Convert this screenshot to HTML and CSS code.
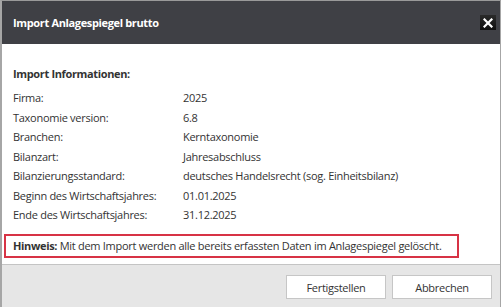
FILE: index.html
```html
<!DOCTYPE html>
<html lang="de">
<head>
<meta charset="utf-8">
<link rel="stylesheet" href="styles.css">
</head>
<body>
<div class="dialog">
  <div class="header">
    <span class="title">Import Anlagespiegel brutto</span>
    <button class="close" aria-label="Schließen">
      <svg width="10" height="10" viewBox="0 0 10 10"><path d="M1.5 1.5 L8.5 8.5 M8.5 1.5 L1.5 8.5" stroke="#fff" stroke-width="2.2" stroke-linecap="square"/></svg>
    </button>
  </div>
  <div class="content">
    <div class="section-title">Import Informationen:</div>
    <div class="info">
      <div class="label">Firma:</div><div class="value">2025</div>
      <div class="label">Taxonomie version:</div><div class="value">6.8</div>
      <div class="label">Branchen:</div><div class="value">Kerntaxonomie</div>
      <div class="label">Bilanzart:</div><div class="value">Jahresabschluss</div>
      <div class="label">Bilanzierungsstandard:</div><div class="value">deutsches Handelsrecht (sog. Einheitsbilanz)</div>
      <div class="label">Beginn des Wirtschaftsjahres:</div><div class="value">01.01.2025</div>
      <div class="label">Ende des Wirtschaftsjahres:</div><div class="value">31.12.2025</div>
    </div>
    <div class="notice"><strong>Hinweis:</strong> Mit dem Import werden alle bereits erfassten Daten im Anlagespiegel gelöscht.</div>
  </div>
  <div class="footer">
    <button class="btn">Fertigstellen</button>
    <button class="btn">Abbrechen</button>
  </div>
</div>
</body>
</html>
```
FILE: styles.css
```css
html, body {
  margin: 0;
  padding: 0;
  background: #ffffff;
}
body {
  font-family: "Open Sans", "Noto Sans", sans-serif;
  font-size: 11px;
  letter-spacing: -0.28px;
  color: #333333;
}
.dialog {
  width: 498px;
  height: 306px;
  border-left: 2px solid #a6a6a6;
  border-right: 1px solid #a6a6a6;
  border-top: 1px solid #9a9a9a;
  display: flex;
  flex-direction: column;
  background: #ffffff;
}
.header {
  height: 43px;
  background: #3f4045;
  display: flex;
  align-items: center;
  justify-content: space-between;
  padding: 0 4px 0 11px;
}
.title {
  color: #ffffff;
  font-weight: bold;
  font-size: 11px;
  letter-spacing: -0.35px;
}
.close {
  width: 16px;
  height: 15px;
  padding: 0;
  border: none;
  background: linear-gradient(#2a2a2a, #0f0f0f);
  display: flex;
  align-items: center;
  justify-content: center;
}
.content {
  flex: 1;
  padding: 20px 0 0 0;
}
.section-title {
  font-weight: bold;
  line-height: 20px;
  padding-left: 11px;
  margin-bottom: 4px;
  letter-spacing: -0.35px;
}
.info {
  display: grid;
  grid-template-columns: 170px 1fr;
  grid-auto-rows: 19.5px;
  align-items: center;
  padding-left: 11px;
}
.notice {
  margin: 9px 0 0 2px;
  width: 444px;
  height: 20px;
  border: 2px solid #d73345;
  line-height: 20px;
  padding-left: 7px;
  white-space: nowrap;
}
.notice strong {
  letter-spacing: -0.35px;
}
.footer {
  height: 43px;
  border-top: 1px solid #c4c4c4;
  background: #e6e6e6;
  display: flex;
  justify-content: flex-end;
  gap: 6px;
  padding: 10px 8px 0 0;
  box-sizing: border-box;
}
.btn {
  width: 100px;
  height: 24px;
  background: #ffffff;
  border: 1px solid #c6c6c6;
  font-family: inherit;
  font-size: 11px;
  letter-spacing: -0.28px;
  color: #333333;
  padding: 0;
}
```
